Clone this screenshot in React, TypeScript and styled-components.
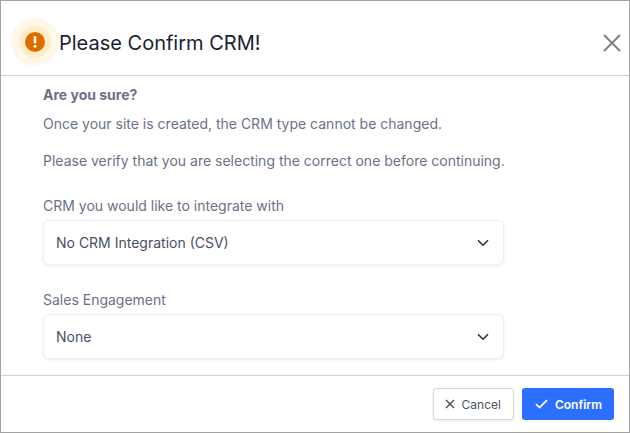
import styled, { createGlobalStyle } from "styled-components";

const GlobalStyle = createGlobalStyle`
  html, body {
    margin: 0;
    padding: 0;
    background: #fff;
  }
  * {
    box-sizing: border-box;
  }
`;

export default function App() {
  return (
    <>
      <GlobalStyle />
      <Modal>
        <Header>
          <HeaderLeft>
            <WarningOuter>
              <WarningInner>
                <WarningDot>
                  <svg width="14" height="14" viewBox="0 0 14 14">
                    <rect x="5.7" y="1" width="2.6" height="7.6" rx="1.3" fill="#fff" />
                    <circle cx="7" cy="11.2" r="1.5" fill="#fff" />
                  </svg>
                </WarningDot>
              </WarningInner>
            </WarningOuter>
            <Title>Please Confirm CRM!</Title>
          </HeaderLeft>
          <CloseButton aria-label="Close">
            <svg width="18" height="18" viewBox="0 0 18 18">
              <path d="M1 1L17 17M17 1L1 17" stroke="#808080" strokeWidth="1.9" fill="none" />
            </svg>
          </CloseButton>
        </Header>
        <Body>
          <Strong>Are you sure?</Strong>
          <Paragraph>Once your site is created, the CRM type cannot be changed.</Paragraph>
          <Paragraph>Please verify that you are selecting the correct one before continuing.</Paragraph>
          <Field>
            <Label>CRM you would like to integrate with</Label>
            <Select>
              <span>No CRM Integration (CSV)</span>
              <Chevron />
            </Select>
          </Field>
          <Field>
            <Label>Sales Engagement</Label>
            <Select>
              <span>None</span>
              <Chevron />
            </Select>
          </Field>
        </Body>
        <Footer>
          <CancelButton>
            <svg width="10" height="10" viewBox="0 0 10 10">
              <path d="M1 1L9 9M9 1L1 9" stroke="#4a5163" strokeWidth="1.5" fill="none" />
            </svg>
            Cancel
          </CancelButton>
          <ConfirmButton>
            <svg width="13" height="10" viewBox="0 0 13 10">
              <path d="M1 5.2L4.6 8.6L12 1.2" stroke="#fff" strokeWidth="1.8" fill="none" />
            </svg>
            Confirm
          </ConfirmButton>
        </Footer>
      </Modal>
    </>
  );
}

function Chevron() {
  return (
    <svg width="12" height="8" viewBox="0 0 12 8">
      <path d="M1 1.2L6 6.2L11 1.2" stroke="#2b2f3a" strokeWidth="1.6" fill="none" />
    </svg>
  );
}

const Modal = styled.div`
  display: flex;
  flex-direction: column;
  width: 630px;
  height: 433px;
  background: #fff;
  border: 1px solid #a3a3a3;
  font-family: Inter, "Liberation Sans", sans-serif;
`;

const Header = styled.div`
  display: flex;
  align-items: center;
  justify-content: space-between;
  height: 75px;
  padding: 8px 8px 0 10px;
  border-bottom: 1px solid #cfd0d8;
`;

const HeaderLeft = styled.div`
  display: flex;
  align-items: center;
`;

const WarningOuter = styled.div`
  display: flex;
  align-items: center;
  justify-content: center;
  width: 48px;
  height: 48px;
  border-radius: 50%;
  background: #fff8e8;
`;

const WarningInner = styled.div`
  display: flex;
  align-items: center;
  justify-content: center;
  width: 32px;
  height: 32px;
  border-radius: 50%;
  background: #ffedc9;
`;

const WarningDot = styled.div`
  display: flex;
  align-items: center;
  justify-content: center;
  width: 20px;
  height: 20px;
  border-radius: 50%;
  background: #e06c00;
`;

const Title = styled.h1`
  margin: 0;
  padding-top: 2px;
  font-size: 20px;
  font-weight: 400;
  color: #1a2233;
`;

const CloseButton = styled.button`
  display: flex;
  margin-top: 2px;
  padding: 0;
  border: none;
  background: transparent;
`;

const Body = styled.div`
  display: flex;
  flex-direction: column;
  flex: 1;
  padding: 10px 125px 0 42px;
`;

const Strong = styled.div`
  font-size: 14px;
  line-height: 17px;
  font-weight: 700;
  color: #6b7287;
`;

const Paragraph = styled.p`
  margin: 11px 0 0;
  font-size: 14px;
  line-height: 20px;
  color: #6b7287;
  white-space: nowrap;
  & + & {
    margin-top: 17px;
  }
`;

const Field = styled.div`
  display: flex;
  flex-direction: column;
  margin-top: 26px;
`;

const Label = styled.label`
  margin-bottom: 5px;
  font-size: 14px;
  line-height: 18px;
  color: #6b7287;
`;

const Select = styled.div`
  display: flex;
  align-items: center;
  justify-content: space-between;
  height: 45px;
  padding: 0 14px 0 12px;
  border: 1px solid #eeeef2;
  border-radius: 6px;
  background: #fff;
  box-shadow: 0 1px 3px rgba(30, 35, 60, 0.08);
  font-size: 14px;
  color: #4a5163;
`;

const Footer = styled.div`
  display: flex;
  align-items: center;
  justify-content: flex-end;
  gap: 8px;
  height: 57px;
  padding: 0 15px 0 0;
  border-top: 1px solid #cfd0d8;
`;

const CancelButton = styled.button`
  display: flex;
  align-items: center;
  gap: 7px;
  height: 32px;
  padding: 0 12px 0 11px;
  border: 1px solid #d6d7de;
  border-radius: 3px;
  background: #fff;
  box-shadow: 0 1px 2px rgba(30, 35, 60, 0.08);
  font-family: inherit;
  font-size: 12px;
  font-weight: 400;
  color: #4a5163;
`;

const ConfirmButton = styled.button`
  display: flex;
  align-items: center;
  gap: 7px;
  height: 32px;
  padding: 0 12px 0 13px;
  border: none;
  border-radius: 3px;
  background: #2c6eff;
  font-family: inherit;
  font-size: 12px;
  font-weight: 600;
  color: #fff;
`;
